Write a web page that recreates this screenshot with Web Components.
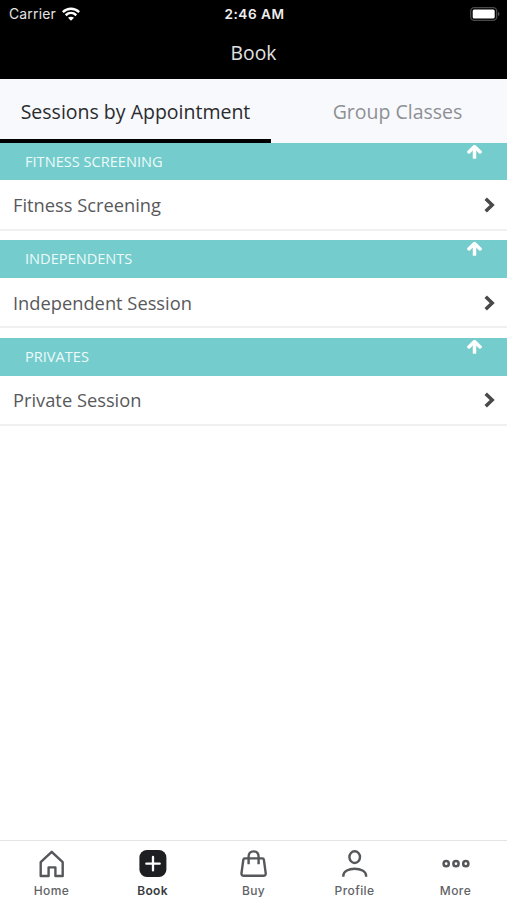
<!DOCTYPE html>
<html lang="en">
<head>
<meta charset="utf-8">
<title>Book</title>
<style>
html,body{margin:0;height:100%;background:#fff}
body{font-family:"Open Sans","Noto Sans",sans-serif}
</style>
</head>
<body>
<booking-app></booking-app>
<script>
class BaseElement extends HTMLElement {
  connectedCallback() {
    if (!this.shadowRoot) this.attachShadow({mode: "open"}).innerHTML = this.render();
  }
}

customElements.define("status-bar", class extends BaseElement {
  render() { return `<style>
    :host{display:grid;grid-template-columns:1fr auto 1fr;align-items:center;height:27px;padding:0 7px 0 9px;color:#e4e4e4;font:400 13.9px/27px Inter,Roboto,sans-serif}
    .left{display:flex;align-items:center;gap:6px}
    time{padding-top:1px}
    .carrier{letter-spacing:.2px}
    time{font-weight:600;font-size:13.6px;letter-spacing:.5px;color:#eee}
    .battery{justify-self:end;display:block}
    svg{display:block;margin-top:-1px}
  </style>
  <div class="left"><span class="carrier">Carrier</span>
    <svg width="18" height="14" viewBox="0 0 18 14" fill="none" stroke="#fff" stroke-width="2.5"><path d="M.8 5.1C5.5.7 12.5.7 17.2 5.1M3.7 8.2c3.1-2.8 7.5-2.8 10.6 0"/><path d="M9 13.8 6 10.8c1.7-1.5 4.3-1.5 6 0z" fill="#fff" stroke="none"/></svg>
  </div>
  <time>2:46 AM</time>
  <svg class="battery" width="30" height="14" viewBox="0 0 30 14"><rect x=".7" y=".7" width="26" height="12.6" rx="3.5" fill="none" stroke="#4a4a4a" stroke-width="1.3"/><rect x="2.7" y="2.4" width="22" height="9.2" rx="1.5" fill="#fff"/><path d="M28 5v4q1.5-.6 1.5-2t-1.5-2" fill="#555"/></svg>`; }
});

customElements.define("title-bar", class extends BaseElement {
  render() { return `<style>
    :host{display:flex;justify-content:center;align-items:center;height:52px;color:#e2e2e2;font-size:19.3px;line-height:26px}
  </style><span><slot></slot></span>`; }
});

customElements.define("tab-item", class extends BaseElement {
  render() { return `<style>
    :host{display:flex;align-items:center;justify-content:center;box-sizing:border-box;height:63.6px;font-size:19.5px;line-height:26px;color:#8e9094;padding-top:6px;border-bottom:4px solid transparent}
    :host([active]){color:#2a2b2e;border-bottom-color:#000}
  </style><span><slot></slot></span>`; }
});

customElements.define("tab-strip", class extends BaseElement {
  render() { return `<style>
    :host{display:grid;grid-template-columns:271px 1fr;height:63.6px;background:#f8f9fc}
    ::slotted(:last-child){padding-left:17px}
  </style><slot></slot>`; }
});

customElements.define("session-group", class extends BaseElement {
  render() { return `<style>
    :host{display:block;height:88px;margin-bottom:9.7px}
    header{display:flex;justify-content:space-between;align-items:flex-start;height:37.7px;background:#74cccc;color:#edfafa;padding:0 25px;font-size:14.6px;line-height:36px}
    header svg{display:block;margin-top:1px}
    .row{display:flex;justify-content:space-between;align-items:center;box-sizing:border-box;height:50.3px;padding:1px 12px 0 13px;border-bottom:2px solid #f0f0f0;background:#fff;color:#58595b;font-size:18.3px;line-height:26px}
    .row svg{display:block}
  </style>
  <header><span class="title">${this.getAttribute("heading")}</span>
    <svg width="15" height="15" viewBox="0 0 15 15" fill="none" stroke="#fff" stroke-width="3.5" stroke-linejoin="round"><path d="M7.5 14.7V3.5"/><path d="M1.9 7.9 7.5 2.5l5.6 5.4" stroke-linecap="round"/></svg>
  </header>
  <div class="row"><span><slot></slot></span>
    <svg width="11" height="16" viewBox="0 0 11 16" fill="none" stroke="#494949" stroke-width="3.5"><path d="M1.7 1.7 8.2 8l-6.5 6.3"/></svg>
  </div>`; }
});

const ICONS = {
  home: `<path d="M2.7 12.2 13.7 1.8l11 10.4V26h-7.3v-8.6h-6.8V26H2.7z" stroke-linejoin="round"/>`,
  book: `<rect x=".4" y="0" width="27" height="27" rx="7.5" fill="#1e1f22" stroke="none"/><path d="M14 7v13.4M7.3 13.7h13.4" stroke="#fff" stroke-width="2.3" stroke-linecap="round"/>`,
  buy: `<path d="M4.8 8.4h17.6q1.3 0 1.5 1.4l1.8 13.3q.3 2.7-2.4 2.7H3.9q-2.7 0-2.4-2.7L3.3 9.8q.2-1.4 1.5-1.4zM8.6 14.3V6.800q0-5.400 5-5.400t5 5.400v7.500" stroke-linejoin="round"/>`,
  profile: `<ellipse cx="13.7" cy="7.1" rx="5.3" ry="5.9"/><path d="M2.3 26.7v-1c0-9.3 22.8-9.3 22.8 0v1"/>`,
  more: `<g stroke-width="2.5"><circle cx="4.2" cy="13.7" r="2.6"/><circle cx="14" cy="13.7" r="2.6"/><circle cx="23.8" cy="13.7" r="2.6"/></g>`
};
customElements.define("nav-item", class extends BaseElement {
  render() { return `<style>
    :host{display:flex;flex-direction:column;align-items:center;color:#626366;font:500 12px/16px Inter,Roboto,sans-serif;letter-spacing:.4px;padding-top:9px}
    :host([active]){color:#3a3b3e;font-weight:600;letter-spacing:.3px}
    svg{display:block;overflow:visible;margin-bottom:5px}
  </style>
  <svg width="28" height="28" viewBox="0 0 28 28" fill="none" stroke="#55575b" stroke-width="2.4">${ICONS[this.getAttribute("icon")]}</svg><span><slot></slot></span>`; }
});

customElements.define("bottom-nav", class extends BaseElement {
  render() { return `<style>
    :host{display:grid;grid-template-columns:repeat(5,101px);justify-content:center;box-sizing:border-box;height:60px;border-top:1px solid #e4e4e4;background:#fff}
  </style><slot></slot>`; }
});

customElements.define("booking-app", class extends BaseElement {
  render() { return `<style>
    :host{display:flex;flex-direction:column;width:507px;height:900px;overflow:hidden;background:#fff}
    .top{background:#000;height:79px;flex:none}
    main{flex:1;min-height:0}
  </style>
  <div class="top"><status-bar></status-bar><title-bar>Book</title-bar></div>
  <tab-strip><tab-item active>Sessions by Appointment</tab-item><tab-item>Group Classes</tab-item></tab-strip>
  <main>
    <session-group heading="FITNESS SCREENING">Fitness Screening</session-group>
    <session-group heading="INDEPENDENTS">Independent Session</session-group>
    <session-group heading="PRIVATES">Private Session</session-group>
  </main>
  <bottom-nav>
    <nav-item icon="home">Home</nav-item>
    <nav-item icon="book" active>Book</nav-item>
    <nav-item icon="buy">Buy</nav-item>
    <nav-item icon="profile">Profile</nav-item>
    <nav-item icon="more">More</nav-item>
  </bottom-nav>`; }
});
</script>
</body>
</html>
